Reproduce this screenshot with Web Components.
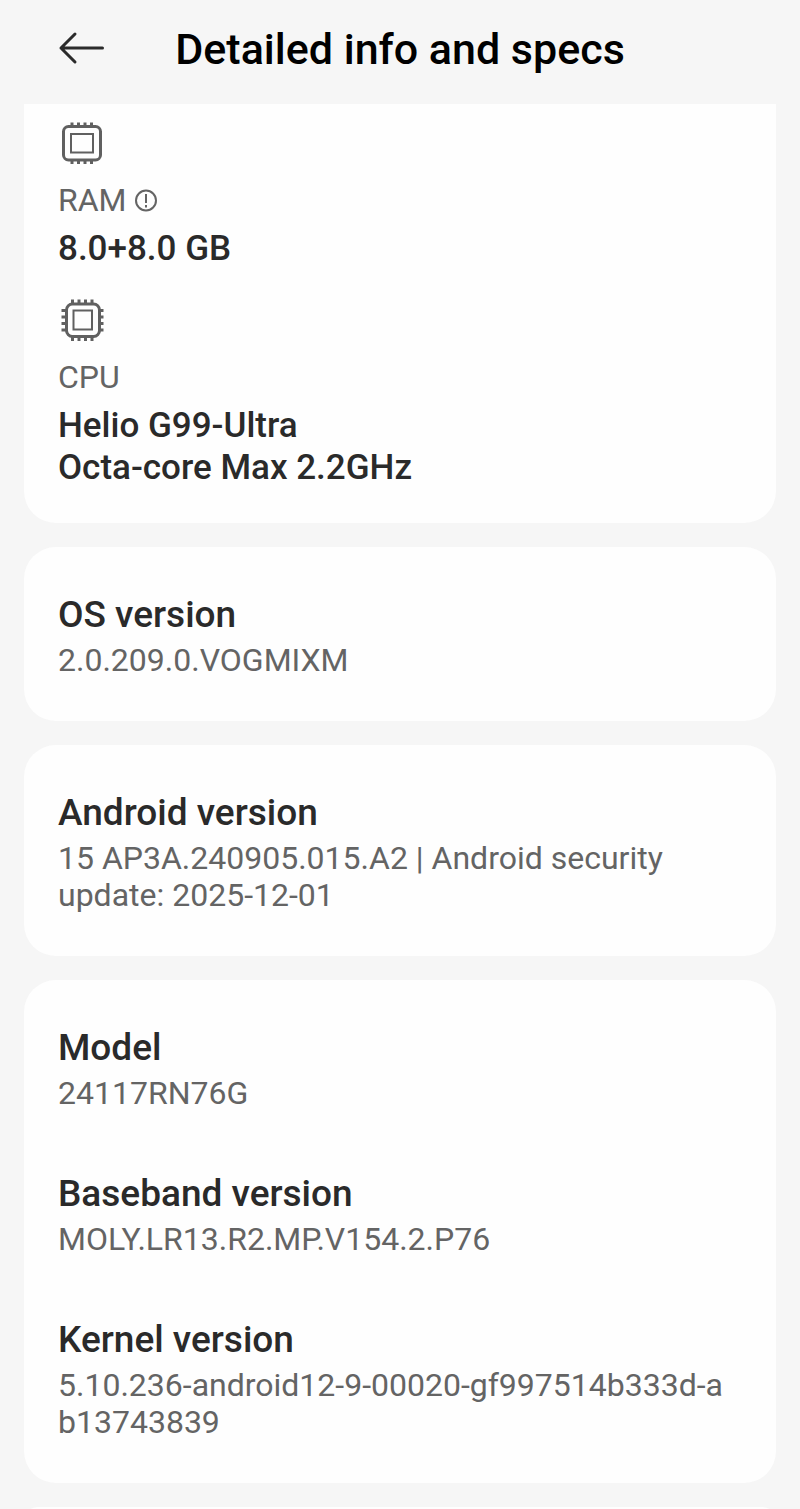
<!DOCTYPE html>
<html lang="en">
<head>
<meta charset="utf-8">
<meta name="viewport" content="width=device-width, initial-scale=1">
<title>Detailed info and specs</title>
<style>
  body {
    margin: 0;
    background: #f6f6f6;
    font-family: Roboto, 'Liberation Sans', sans-serif;
  }
</style>
</head>
<body>
<specs-page>
  <page-header slot="header">Detailed info and specs</page-header>

  <info-card scrolled>
    <hardware-item icon="ram" label="RAM" hint="About memory extension">8.0+8.0 GB</hardware-item>
    <hardware-item icon="cpu" label="CPU">Helio G99-Ultra<br>Octa-core Max 2.2GHz</hardware-item>
  </info-card>

  <info-card>
    <info-row name="OS version">2.0.209.0.VOGMIXM</info-row>
  </info-card>

  <info-card>
    <info-row name="Android version">15 AP3A.240905.015.A2 | Android security update: 2025-12-01</info-row>
  </info-card>

  <info-card>
    <info-row name="Model">24117RN76G</info-row>
    <info-row name="Baseband version">MOLY.LR13.R2.MP.V154.2.P76</info-row>
    <info-row name="Kernel version" breakable>5.10.236-android12-9-00020-gf997514b333d-ab13743839</info-row>
  </info-card>

  <info-card></info-card>
</specs-page>

<script>
const tplPage = document.createElement('template');
tplPage.innerHTML = `
  <style>
    :host {
      display: flex;
      flex-direction: column;
      height: 100vh;
      overflow: hidden;
    }
    main {
      display: flex;
      flex-direction: column;
      gap: 24px;
      flex: 1;
      min-height: 0;
      padding: 0 24px;
      overflow: hidden;
    }
  </style>
  <slot name="header"></slot>
  <main><slot></slot></main>
`;

class SpecsPage extends HTMLElement {
  constructor() {
    super();
    this.attachShadow({mode:'open'}).appendChild(tplPage.content.cloneNode(true));
  }
}

const tplHeader = document.createElement('template');
tplHeader.innerHTML = `
  <style>
    :host {
      display: block;
      flex: none;
      color: #000;
    }
    header {
      display: grid;
      grid-template-columns: 56px 1fr 56px;
      align-items: center;
      min-height: 98px;
      padding: 0 54px 6px;
    }
    button {
      display: flex;
      justify-content: center;
      padding: 0 0 3px;
      border: 0;
      background: none;
      color: #2b2b2b;
      cursor: pointer;
    }
    h1 {
      margin: 0;
      font-size: 43px;
      font-weight: 500;
      line-height: 50px;
      text-align: center;
    }
  </style>
  <header>
    <button type="button" aria-label="Back">
      <svg width="48" height="36" viewBox="0 0 48 36" fill="none" stroke="currentColor" stroke-width="3" stroke-linecap="round" stroke-linejoin="round">
        <path d="M44.500 18H3M17 4L3 18l14 14"/>
      </svg>
    </button>
    <h1><slot></slot></h1>
  </header>
`;

class PageHeader extends HTMLElement {
  constructor() {
    super();
    this.attachShadow({mode:'open'}).appendChild(tplHeader.content.cloneNode(true));
  }
}

const tplCard = document.createElement('template');
tplCard.innerHTML = `
  <style>
    :host {
      display: block;
      flex: none;
      box-sizing: border-box;
      padding: 16px 48px 12px 34px;
      border-radius: 32px;
      background: #fefefe;
    }
    /* first card, its top already under the header */
    :host([scrolled]) {
      padding-top: 18px;
      padding-bottom: 5px;
      border-top-left-radius: 0;
      border-top-right-radius: 0;
    }
  </style>
  <slot></slot>
`;

class InfoCard extends HTMLElement {
  constructor() {
    super();
    this.attachShadow({mode:'open'}).appendChild(tplCard.content.cloneNode(true));
  }
}

const tplRow = document.createElement('template');
tplRow.innerHTML = `
  <style>
    :host {
      display: block;
      padding: 31px 0 30px;
    }
    h2 {
      margin: 0 0 6px;
      color: #2a2a2a;
      font-size: 37px;
      font-weight: 500;
      line-height: 42px;
    }
    p {
      margin: 0;
      color: #646464;
      font-size: 32px;
      line-height: 37px;
    }
    :host([breakable]) p {
      word-break: break-all;
    }
  </style>
  <h2></h2>
  <p><slot></slot></p>
`;

class InfoRow extends HTMLElement {
  constructor() {
    super();
    this.attachShadow({mode:'open'}).appendChild(tplRow.content.cloneNode(true));
  }

  connectedCallback() {
    this.shadowRoot.querySelector('h2').textContent = this.getAttribute('name');
  }
}

const icons = {
  ram: `
    <rect x="5.500" y="4.500" width="37" height="33.500" rx="5" stroke-width="3"/>
    <rect x="13" y="12" width="22" height="18.500" stroke-width="2"/>
    <path stroke-width="3" d="M14 4V.5M20.500 4V.5M27 4V.5M33.500 4V.5M14 39v3M20.500 39v3M27 39v3M33.500 39v3"/>`,
  cpu: `
    <rect x="8.500" y="5" width="33" height="32.500" rx="6" stroke-width="3"/>
    <rect x="15.500" y="11.500" width="18.500" height="19" stroke-width="2"/>
    <path stroke-width="3" d="M14.500 5V.5M21 4V.5M27.500 4V.5M34 5V.5M14.500 38v4M21 39v3M27.500 39v3M34 38v4M8 11.500H3.500M7 18H3.500M7 24.500H3.500M8 31H3.500M42 11.500h3.500M43 18h2.500M43 24.500h2.500M42 31h3.500"/>`
};

const tplHardware = document.createElement('template');
tplHardware.innerHTML = `
  <style>
    :host {
      display: block;
      padding-bottom: 29px;
    }
    .icon {
      display: block;
      color: #606060;
    }
    .label {
      display: flex;
      align-items: center;
      gap: 7px;
      margin-top: 18px;
      color: #646464;
      font-size: 32px;
      line-height: 37px;
    }
    button {
      display: flex;
      padding: 0;
      border: 0;
      background: none;
      color: inherit;
      cursor: pointer;
    }
    button[hidden] {
      display: none;
    }
    .value {
      margin-top: 9px;
      color: #2a2a2a;
      font-size: 35px;
      font-weight: 500;
      line-height: 42px;
    }
  </style>
  <svg class="icon" width="48" height="42" viewBox="0 0 48 42" fill="none" stroke="currentColor"></svg>
  <div class="label">
    <span></span>
    <button type="button" hidden>
      <svg width="24" height="24" viewBox="0 0 24 24" fill="none" stroke="currentColor" stroke-width="2">
        <circle cx="12" cy="11.500" r="10"/>
        <path d="M12 5v9M12 16v2.500"/>
      </svg>
    </button>
  </div>
  <div class="value"><slot></slot></div>
`;

class HardwareItem extends HTMLElement {
  constructor() {
    super();
    this.attachShadow({mode:'open'}).appendChild(tplHardware.content.cloneNode(true));
  }

  connectedCallback() {
    const root = this.shadowRoot;
    root.querySelector('.icon').innerHTML = icons[this.getAttribute('icon')];
    root.querySelector('.label span').textContent = this.getAttribute('label');

    const hint = this.getAttribute('hint');
    if (hint) {
      const button = root.querySelector('button');
      button.hidden = false;
      button.setAttribute('aria-label', hint);
    }
  }
}

customElements.define('specs-page', SpecsPage);
customElements.define('page-header', PageHeader);
customElements.define('info-card', InfoCard);
customElements.define('info-row', InfoRow);
customElements.define('hardware-item', HardwareItem);
</script>
</body>
</html>
